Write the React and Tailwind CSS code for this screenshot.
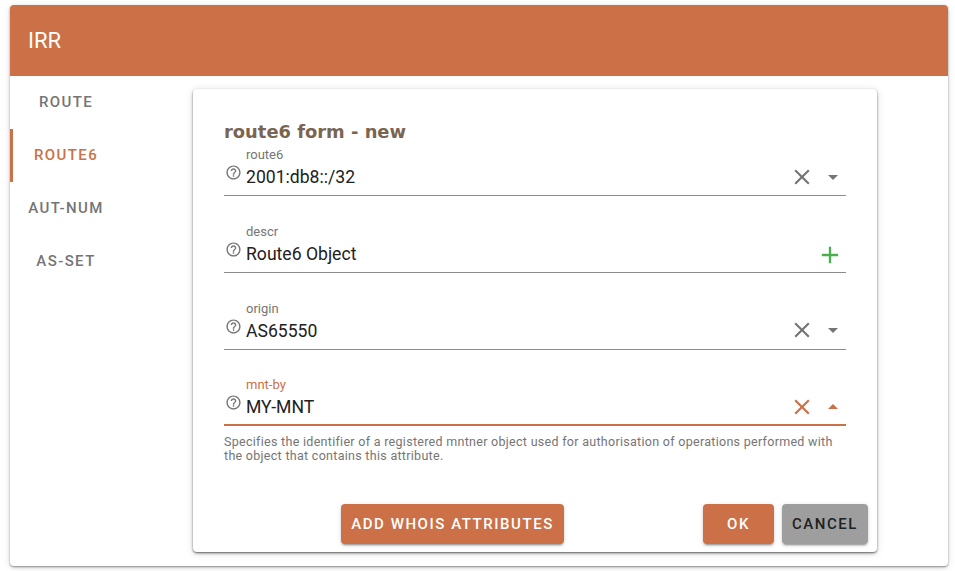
function HelpIcon() {
  return (
    <svg viewBox="0 0 24 24" className="w-[17px] h-[17px] fill-[#757575]">
      <path d="M11 18h2v-2h-2v2zm1-16C6.48 2 2 6.48 2 12s4.48 10 10 10 10-4.48 10-10S17.52 2 12 2zm0 18c-4.41 0-8-3.59-8-8s3.59-8 8-8 8 3.59 8 8-3.59 8-8 8zm0-14c-2.21 0-4 1.79-4 4h2c0-1.1.9-2 2-2s2 .9 2 2c0 2-3 1.75-3 5h2c0-2.25 3-2.5 3-5 0-2.21-1.79-4-4-4z" />
    </svg>
  );
}

function ClearIcon({ active }) {
  return (
    <svg viewBox="0 0 24 24" className={`w-[26px] h-[26px] ${active ? "fill-[#cc7047]" : "fill-[#757575]"}`}>
      <path d="M19 6.41L17.59 5 12 10.59 6.41 5 5 6.41 10.59 12 5 17.59 6.41 19 12 13.41 17.59 19 19 17.59 13.41 12z" />
    </svg>
  );
}

function ArrowIcon({ active }) {
  return (
    <svg viewBox="0 0 24 24" className={`w-6 h-6 ${active ? "fill-[#cc7047]" : "fill-[#757575]"}`}>
      <path d={active ? "M7 14l5-5 5 5z" : "M7 10l5 5 5-5z"} />
    </svg>
  );
}

function Field({ label, value, active, multi }) {
  return (
    <div className={`h-[58px] flex flex-col justify-end border-b ${active ? "border-b-2 border-[#cc7047]" : "border-[#8c8c8c]"}`}>
      <div className={`pl-[22px] text-[13px] leading-[14px] ${active ? "text-[#cc7047]" : "text-[#757575]"}`}>{label}</div>
      <div className={`flex items-center h-[29px] ${active ? "mb-[3px]" : "mb-[4px]"}`}>
        <div className="w-[22px] pl-[0.5px] -mt-[8px] shrink-0">
          <HelpIcon />
        </div>
        <div className="flex-1 mt-[2px] text-[17.6px] leading-[29px] text-[#212121]">{value}</div>
        {multi ? (
          <svg viewBox="0 0 24 24" className="w-7 h-7 mr-[2px] mt-[4px] fill-[#4caf50]">
            <path d="M19 13h-6v6h-2v-6H5v-2h6V5h2v6h6v2z" />
          </svg>
        ) : (
          <div className="flex items-center">
            <ClearIcon active={active} />
            <div className="ml-[6px] mr-[1px]">
              <ArrowIcon active={active} />
            </div>
          </div>
        )}
      </div>
    </div>
  );
}

function Tab({ label, active }) {
  return (
    <div
      className={`h-[53px] flex items-center justify-center text-[15px] font-medium tracking-[1.4px] border-l-[3px] pr-[3px] ${
        active ? "border-[#cc7047] text-[#cc7047]" : "border-transparent text-[#757575]"
      }`}
    >
      {label}
    </div>
  );
}

function Btn({ children, className }) {
  return (
    <button className={`h-10 rounded-[4px] text-[15px] font-medium tracking-[1.55px] shadow-[0_3px_1px_-2px_rgba(0,0,0,0.2),0_2px_2px_0_rgba(0,0,0,0.14),0_1px_5px_0_rgba(0,0,0,0.12)] ${className}`}>
      {children}
    </button>
  );
}

export default function App() {
  return (
    <div className="w-[955px] h-[571px] bg-white overflow-hidden px-[10px] pt-[5px] font-['Roboto',sans-serif]">
      <div className="w-[938px] h-[561px] rounded-[4px] bg-white flex flex-col shadow-[0_1px_2px_rgba(0,0,0,0.35),0_2px_4px_-1px_rgba(0,0,0,0.15),0_1px_8px_0_rgba(0,0,0,0.1)]">
        <div className="h-[71px] bg-[#cc7047] rounded-t-[4px] flex items-center pl-[18px] text-[22px] text-white shrink-0">
          IRR
        </div>
        <div className="flex flex-1">
          <div className="w-[112px] shrink-0">
            <Tab label="ROUTE" />
            <Tab label="ROUTE6" active />
            <Tab label="AUT-NUM" />
            <Tab label="AS-SET" />
          </div>
          <div className="pl-[71px] pt-[13px]">
            <div className="w-[684px] h-[463px] rounded-[4px] bg-white px-[31px] pt-[32px] shadow-[0_1px_2px_rgba(0,0,0,0.5),0_2px_4px_-1px_rgba(0,0,0,0.2),0_1px_8px_0_rgba(0,0,0,0.12)]">
              <div className="text-[17.9px] leading-[21px] font-bold text-[#7a6552] font-['DejaVu_Sans',sans-serif]">
                route6 form - new
              </div>
              <div className="-mt-[3.8px] flex flex-col gap-[18.67px]">
                <Field label="route6" value="2001:db8::/32" />
                <Field label="descr" value="Route6 Object" multi />
                <Field label="origin" value="AS65550" />
                <Field label="mnt-by" value="MY-MNT" active />
              </div>
              <p className="mt-[9px] text-[12.5px] leading-[14px] tracking-[0.29px] text-[#757575]">
                Specifies the identifier of a registered mntner object used for authorisation of operations performed with the object that contains this attribute.
              </p>
              <div className="flex mt-[41px] ml-[117px] -mr-[22px]">
                <Btn className="w-[223px] bg-[#cc7047] text-white">ADD WHOIS ATTRIBUTES</Btn>
                <Btn className="w-[71px] ml-[139px] bg-[#cc7047] text-white">OK</Btn>
                <Btn className="w-[86px] ml-[8px] bg-[#9e9e9e] text-[#212121]">CANCEL</Btn>
              </div>
            </div>
          </div>
        </div>
      </div>
    </div>
  );
}
